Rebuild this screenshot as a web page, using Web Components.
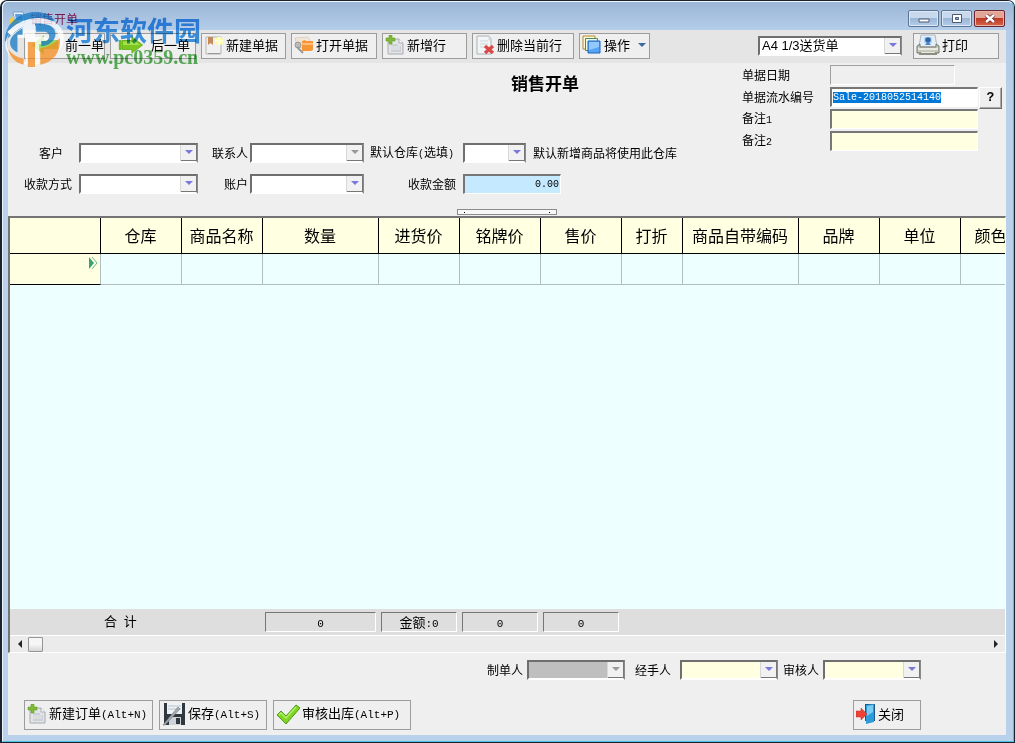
<!DOCTYPE html>
<html lang="zh-CN">
<head>
<meta charset="utf-8">
<meta name="viewport" content="width=device-width, initial-scale=1">
<title>销售开单</title>
<style>
html, body { margin: 0; background: #fff; }
body { font: 12px/20px "Noto Sans CJK SC", "Liberation Sans", sans-serif; color: #000; }
</style>
</head>
<body>
<sales-window></sales-window>

<script>
const ICONS = {
  none: ['0 0 20 20', ''],
  prev: ['0 0 28 22', '<path d="M27 6v9H13v6L1 11 13 1v5z" fill="#7fd02c" opacity=".75"/>'],
  next: ['0 0 28 20', '<path d="M1 5h2v10H1zM4 5h11V1l12 9-12 9v-4H4z" fill="#7cc71f" stroke="#55a313" stroke-width=".8"/><path d="M5 6h11V4l8 6H5z" fill="#a5e04e"/>'],
  bill: ['0 0 20 20', '<path d="M2 2h15v17H2z" fill="#f0f0f0" stroke="#b5b5b5"/><path d="M4 18h12v1H4z" fill="#999"/><path d="M4 2h5v8l-2.5-2L4 10z" fill="#c48a58"/><circle cx="15" cy="6" r="4" fill="#ffff9a"/><path d="M15 2v8M11 6h8" stroke="#fff" stroke-width="1.2"/>'],
  open: ['0 0 20 20', '<path d="M1 3l13-1 3 5-4 6-10-1z" fill="#f1e5da" stroke="#d9c4b4" stroke-width=".7"/><circle cx="4" cy="10" r="3" fill="#bbb" stroke="#999"/><path d="M8 6l3-1 1 1h7v9l-2 1H8z" fill="#f79637"/><path d="M8 8h11v2H8z" fill="#ffbd75"/><path d="M3 12l6 6" stroke="#999" stroke-width="2"/>'],
  add: ['0 0 20 20', '<path d="M3 4h11l4 4v11H3z" fill="#e2e4e7" stroke="#a9abb0"/><path d="M14 4v4h4" fill="#fff" stroke="#a9abb0"/><path d="M6 9h7v2h3v6H6z" fill="#cdd1d6"/><path d="M6 12h9M6 14h9" stroke="#e8eaec"/><path d="M4 0h3v3h3v3H7v3H4V6H1V3h3z" fill="#7fb83a" stroke="#66a024" stroke-width=".6"/>'],
  del: ['0 0 20 20', '<path d="M2 1h12l2 3v15H2z" fill="#f2f5f5" stroke="#aab3b6"/><path d="M14 1v4h3M5 6h8M5 9h8M5 12h5" fill="none" stroke="#cdd5d6"/><path d="M10 11l8 7M18 11l-8 7" stroke="#dc4848" stroke-width="3.4"/>'],
  ops: ['0 0 20 20', '<path d="M1 1h12v13H1z" fill="#fff6d4" stroke="#b08c28"/><path d="M3.500 3.500h12v12h-12z" fill="#eef8ea" stroke="#4a8a6a"/><path d="M6 6h12v12H6z" fill="#57a4f5" stroke="#1f63bd"/><path d="M7 7h10v5L7 15z" fill="#92c8fd"/>'],
  print: ['0 0 24 22', '<path d="M5 1h14l2 12H3z" fill="#e4eef8" stroke="#a9b6c4"/><path d="M8 3h8v6H8z" fill="#b9d8f4"/><circle cx="12" cy="6" r="2.8" fill="#2c64a8"/><path d="M9 11l3-4 3 4z" fill="#4d86c8"/><path d="M1 12l3-2v3h16v-3l3 2v7H1z" fill="#c9cabd" stroke="#77786d"/><path d="M2 15h20" stroke="#f6f6ee" stroke-width="1.4"/><path d="M3 18h18v3H3z" fill="#8d8e83"/><path d="M5 18h14v1H5z" fill="#e5e5dc"/>'],
  save: ['0 0 24 24', '<path d="M2 1h21v22H4l-2-2z" fill="#31383f"/><path d="M5 1h15v11H5z" fill="#eef2f5"/><path d="M6 4h13M6 7h13" stroke="#b9c3ca"/><path d="M7 15h12v8H7z" fill="#cdd3d8"/><path d="M14 16h4v6h-4z" fill="#31383f"/><path d="M1 23L16 5l2 2L3 23z" fill="#a5acb2" stroke="#6f777d" stroke-width=".6"/>'],
  check: ['0 0 24 22', '<path d="M1 12l4-4 5 5L20 2l4 3-14 16z" fill="#7fd424" stroke="#4a9c12"/><path d="M3 12l2-2 5 5L20 4" fill="none" stroke="#b6f06c" stroke-width="1.3"/>'],
  exit: ['0 0 20 22', '<path d="M9 1h10v17H9z" fill="#1d5787"/><path d="M10 2l8-1v18l-8 2z" fill="#2c9bd9"/><path d="M11 3l6-1v7l-6 4z" fill="#79cdf3"/><path d="M0 8h5V5l6 6-6 6v-3H0z" fill="#ee4236" stroke="#c42a22" stroke-width=".5"/>'],
  app: ['0 0 16 16', '<path d="M3 1h10l2 11H5z" fill="#e8f3fc" stroke="#6fa2d2"/><path d="M5 3h7l1 6H6z" fill="#5d9bdc"/><path d="M0 8l4-3v3l5 2-5 5-4-3z" fill="#f2cd48"/>'],
  marker: ['0 0 10 12', '<path d="M1 0v12l5-6z" fill="#3aa374"/><path d="M4 0l5 6-5 6" fill="none" stroke="#6fb594"/>'],
  min: ['0 0 12 9', '<path d="M1 5h10v3H1z" fill="#fff" stroke="#4d5b72"/>'],
  max: ['0 0 12 9', '<path d="M1.500.5h9v8h-9z" fill="#fff" stroke="#4d5b72"/><path d="M4.500 3.500h3v2h-3z" fill="#90a8ca" stroke="#4d5b72"/>'],
  close: ['0 0 12 9', '<path d="M2 1l8 7M10 1L2 8" stroke="#6b2b30" stroke-width="4"/><path d="M2 1l8 7M10 1L2 8" stroke="#fff" stroke-width="2.4"/>'],
  left: ['0 0 5 8', '<path d="M5 0v8L1 4z" fill="#222"/>'],
  right: ['0 0 5 8', '<path d="M0 0v8l4-4z" fill="#222"/>'],
  drop: ['0 0 8 5', '<path d="M0 0h8L4 4z" fill="currentColor"/>'],
};

/* Wraps Latin runs so that they keep the half-width pitch beside Chinese text. */
const mixed = (text) => text.replace(/[\x21-\x7e]+/g, (m) => `<span class="en">${m}</span>`);
const EN = '.en { font-family: "Liberation Mono", monospace; font-size: var(--en, 10px); white-space: pre; }';

function define(name, render, after) {
  customElements.define(name, class extends HTMLElement {
    connectedCallback() {
      if (this.shadowRoot) return;
      const t = document.createElement('template');
      t.innerHTML = render(this);
      this.attachShadow({ mode: 'open' }).append(t.content.cloneNode(true));
      if (after) after(this.shadowRoot, this);
    }
  });
}
const at = (el, n, d = '') => el.getAttribute(n) ?? d;

define('app-icon', (el) => {
  const [box, body] = ICONS[at(el, 'name', 'none')];
  return `<style>
    :host { display: block; flex: none; width: 20px; height: 20px; }
    svg { display: block; width: 100%; height: 100%; }
  </style><svg viewBox="${box}" aria-hidden="true">${body}</svg>`;
});

define('tool-button', (el) => `<style>
    :host { display: block; flex: none; width: var(--w); height: 26px; }
    button { box-sizing: border-box; width: 100%; height: 100%; display: flex; align-items: center; gap: 2px;
      margin: 0; padding: 0 2px 2px; border: 1px solid #9c9c9c; background: #efefef; color: #000;
      font: inherit; font-size: 13px; line-height: 20px; white-space: nowrap; --en: 11px; }
    app-icon { width: var(--icon, 20px); height: var(--icon-h, 20px); }
    .arrow { width: 8px; height: 5px; color: #39699f; margin-left: 6px; }
    ${EN}
  </style>
  <button type="button"><app-icon name="${at(el, 'icon')}"></app-icon><span>${mixed(at(el, 'label'))}</span>${
    el.hasAttribute('menu') ? '<app-icon class="arrow" name="drop"></app-icon>' : ''}</button>`);

define('combo-field', (el) => `<style>
    :host { display: flex; flex: none; align-items: center; height: 20px; }
    label { box-sizing: border-box; width: var(--label, 0px); padding-right: var(--pad, 0px); text-align: right; white-space: nowrap; }
    .box { position: relative; width: var(--control); height: 20px; }
    select { appearance: none; box-sizing: border-box; display: block; width: 100%; height: 100%; margin: 0; padding: 0 20px 0 2px;
      border: 2px solid; border-color: #6f6f6f #8a8a8a #fff #6f6f6f; border-radius: 0; background: var(--fill, #fff);
      color: #000; opacity: 1; font: inherit; font-size: 13px; line-height: 16px;
      font-family: "Liberation Sans", "Noto Sans CJK SC", sans-serif; outline: none; }
    .knob { position: absolute; right: 1px; top: 2px; width: 15px; height: 15px; display: grid; place-items: center; pointer-events: none;
      background: #f1f1f1; border: solid #777; border-width: 0 1px 1px 0; box-shadow: -1px 0 #d8d8d8; }
    .knob app-icon { width: 8px; height: 5px; color: ${el.hasAttribute('disabled') ? '#9a9a9a' : '#7a78dc'}; }
    ${EN}
  </style>
  ${at(el, 'label') ? `<label for="c">${mixed(at(el, 'label'))}</label>` : ''}
  <div class="box"><select id="c" ${at(el, 'label') ? '' : 'aria-label="打印模板"'} ${el.hasAttribute('disabled') ? 'disabled' : ''}><option>${at(el, 'value')}</option></select>
  <span class="knob"><app-icon name="drop"></app-icon></span></div>`);

define('text-field', (el) => `<style>
    :host { display: flex; flex: none; align-items: center; height: 20px; }
    label { box-sizing: border-box; width: var(--label); padding-right: var(--pad, 0px); text-align: var(--align, left); white-space: nowrap; }
    input { box-sizing: border-box; width: var(--control); height: 20px; margin: 0; padding: 0 1px; border-radius: 0; outline: none;
      border: solid; border-width: 2px 1px 1px 2px; border-color: #777 #fff #fff #777; background: var(--fill, #fff); color: #000;
      font: 10px/12px "Liberation Mono", monospace; text-align: var(--text, left); }
    input:disabled { border-width: 1px; border-color: #a0a0a0 #fff #fff #a0a0a0; background: #efefef; }
    input::selection { background: #0078d7; color: #fff; }
    ${EN}
  </style><label for="t">${mixed(at(el, 'label'))}</label><input id="t" type="text" value="${at(el, 'value')}" ${el.hasAttribute('disabled') ? 'disabled' : ''}>`,
  (root, el) => {
    if (!el.hasAttribute('selected')) return;
    const input = root.querySelector('input');
    input.focus();
    input.select();
  });

define('title-bar', () => `<style>
    :host { display: flex; justify-content: space-between; height: 28px; }
    .name { display: flex; align-items: center; gap: 4px; padding-left: 2px; color: #7b1550; height: 34px; }
    .name app-icon { width: 16px; height: 16px; }
    .keys { display: flex; gap: 2px; padding: 8px 1px 0 0; }
    button { box-sizing: border-box; width: 31px; height: 17px; padding: 0; display: grid; place-items: center;
      border: 1px solid #5c7595; border-radius: 2px; background: linear-gradient(#c8d9ee 45%, #9cb6d6 50%, #b5cde9); box-shadow: inset 0 0 0 1px #dce8f5; }
    button.x { border-color: #6c2530; background: linear-gradient(#e3a595 45%, #c03a25 50%, #d2664a); box-shadow: inset 0 0 0 1px #e8b5a8; }
    button app-icon { width: 12px; height: 9px; }
  </style>
  <div class="name"><app-icon name="app"></app-icon><span>销售开单</span></div>
  <div class="keys">
    <button type="button" aria-label="最小化"><app-icon name="min"></app-icon></button>
    <button type="button" aria-label="最大化"><app-icon name="max"></app-icon></button>
    <button type="button" class="x" aria-label="关闭窗口"><app-icon name="close"></app-icon></button>
  </div>`);

define('tool-bar', () => `<style>
    :host { display: flex; align-items: flex-start; gap: 5px; height: 33px; box-sizing: border-box; padding: 3px 7px 0 16px; background: #e5e5e5; }
    .space { flex: 1; }
    combo-field { padding-top: 3px; margin-right: 6px; --control: 144px; }
  </style>
  <tool-button icon="prev" label="前一单" style="--w:81px;--icon:36px;--icon-h:22px"></tool-button>
  <tool-button icon="next" label="后一单" style="--w:86px;--icon:36px;--icon-h:18px"></tool-button>
  <tool-button icon="bill" label="新建单据" style="--w:85px"></tool-button>
  <tool-button icon="open" label="打开单据" style="--w:86px"></tool-button>
  <tool-button icon="add" label="新增行" style="--w:85px"></tool-button>
  <tool-button icon="del" label="删除当前行" style="--w:102px"></tool-button>
  <tool-button icon="ops" label="操作" menu style="--w:71px"></tool-button>
  <span class="space"></span>
  <combo-field value="A4 1/3送货单"></combo-field>
  <tool-button icon="print" label="打印" style="--w:86px;--icon:24px;--icon-h:22px"></tool-button>`);

define('order-head', () => `<style>
    :host { display: grid; grid-template-columns: 1fr 264px; }
    .main { display: flex; flex-direction: column; gap: 11px; padding: 8px 0 0 16px; }
    h1 { margin: 0 0 37px; padding-left: 324px; text-align: center; font-size: 17px; line-height: 24px; }
    .row { display: flex; gap: 0; white-space: nowrap; }
    .one { --label: 55px; --control: 119px; }
    .two { --label: 52px; --control: 114px; }
    .three { --label: 99px; }
    .hint { padding-left: 7px; }
    aside { display: flex; flex-direction: column; gap: 2px; padding-top: 2px; --label: 88px; --control: 148px; }
    .number { display: flex; gap: 1px; }
    .number button { width: 23px; height: 22px; margin: 0 0 -2px; padding: 0; border: 1px solid; border-color: #fff #6f6f6f #6f6f6f #fff;
      box-shadow: inset -1px -1px #a8a8a8; background: #efefef; color: #000; font: bold 13px/18px "Liberation Mono", monospace; }
  </style>
  <div class="main">
    <h1>销售开单</h1>
    <div class="row">
      <combo-field class="one" label="客户" style="--pad:16px"></combo-field>
      <combo-field class="two" label="联系人" disabled style="--pad:2px"></combo-field>
      <combo-field class="three" label="默认仓库(选填)" style="--pad:9px;--control:63px"></combo-field>
      <span class="hint">默认新增商品将使用此仓库</span>
    </div>
    <div class="row">
      <combo-field class="one" label="收款方式" style="--pad:7px"></combo-field>
      <combo-field class="two" label="账户" style="--pad:2px"></combo-field>
      <text-field class="three" label="收款金额" value="0.00" style="--pad:7px;--align:right;--control:98px;--fill:#c5eaff;--text:right"></text-field>
    </div>
  </div>
  <aside>
    <text-field label="单据日期" disabled style="--control:125px"></text-field>
    <div class="number"><text-field label="单据流水编号" value="Sale-2018052514140" selected></text-field><button type="button">?</button></div>
    <text-field label="备注1" style="--fill:#ffffe1"></text-field>
    <text-field label="备注2" style="--fill:#ffffe1"></text-field>
  </aside>`);

define('split-handle', () => `<style>
    :host { display: flex; justify-content: center; height: 6px; margin: 15px 0 1px; }
    div { box-sizing: border-box; width: 100px; display: flex; justify-content: space-between; align-items: center; padding: 0 6px; border: 1px solid #8c8c8c; background: #f8f8f8; }
    i { width: 1px; height: 1px; background: #000; }
  </style><div role="separator"><i></i><i></i></div>`);

const COLS = [['', 91], ['仓库', 81], ['商品名称', 81], ['数量', 116], ['进货价', 81], ['铭牌价', 81], ['售价', 81],
  ['打折', 61], ['商品自带编码', 116], ['品牌', 81], ['单位', 81], ['颜色', 61]];

define('data-grid', () => `<style>
    :host { display: flex; flex-direction: column; box-sizing: border-box; border: solid; border-width: 2px 1px 1px 2px; border-color: #747474 #fff #fff #747474; }
    .view { flex: 1; overflow: hidden; background: #edffff; }
    table { table-layout: fixed; width: ${COLS.reduce((s, c) => s + c[1], 0)}px; border-collapse: separate; border-spacing: 0; }
    th, td { box-sizing: border-box; padding: 0; white-space: nowrap; }
    thead th { height: 36px; padding: 0 1px 2px 0; background: #ffffe1; border: solid #000; border-width: 0 1px 1px 0; font-size: 16px; font-weight: 400; line-height: 24px; }
    td, tbody th { height: 31px; border: solid #b2bfbf; border-width: 0 1px 1px 0; }
    tbody th { background: #ffffe1; border-bottom-color: #000; vertical-align: top; }
    tbody app-icon { width: 10px; height: 12px; margin: 3px 2px 0 auto; }
    .sum { display: flex; align-items: flex-start; gap: 5px; height: 26px; box-sizing: border-box; padding-top: 3px; background: #dedede; font-size: 13px; line-height: 18px; --en: 11px; text-align: center; }
    .sum .t { width: 156px; padding-left: 94px; text-align: left; }
    output { box-sizing: border-box; width: 76px; height: 20px; border: 1px solid; border-color: #767676 #fff #fff #767676; }
    output.wide { width: 111px; }
    .bar { display: flex; align-items: center; height: 16px; border-top: 1px solid #fff; background: #ebebeb; }
    .bar button { width: 18px; height: 16px; padding: 0; border: 0; background: none; display: grid; place-items: center; }
    .bar button app-icon { width: 5px; height: 8px; }
    .thumb { box-sizing: border-box; width: 15px; height: 15px; border: 1px solid #959595; border-radius: 1px; background: linear-gradient(#f6f6f6 50%, #d6d6d6); }
    .track { flex: 1; }
    ${EN}
  </style>
  <div class="view"><table>
    <colgroup>${COLS.map((c) => `<col style="width:${c[1]}px">`).join('')}</colgroup>
    <thead><tr>${COLS.map((c) => `<th scope="col">${c[0]}</th>`).join('')}</tr></thead>
    <tbody><tr><th scope="row"><app-icon name="marker"></app-icon></th>${'<td></td>'.repeat(COLS.length - 1)}</tr></tbody>
  </table></div>
  <div class="sum"><span class="t">合<span class="en"> </span>计</span><output class="wide">${mixed('0')}</output><output>${mixed('金额:0')}</output><output>${mixed('0')}</output><output>${mixed('0')}</output></div>
  <div class="bar"><button type="button" aria-label="向左滚动"><app-icon name="left"></app-icon></button><span class="thumb"></span><span class="track"></span><button type="button" aria-label="向右滚动"><app-icon name="right"></app-icon></button></div>`);

define('order-foot', () => `<style>
    :host { display: flex; flex-direction: column; gap: 20px; padding: 7px 85px 5px 16px; }
    .people { display: flex; justify-content: flex-end; --control: 98px; }
    .acts { display: flex; gap: 6px; }
    .acts tool-button { height: 30px; }
    .space { flex: 1; }
  </style>
  <div class="people">
    <combo-field label="制单人" disabled style="--label:40px;--pad:4px;--fill:#bfbfbf"></combo-field>
    <combo-field label="经手人" style="--label:55px;--pad:9px;--fill:#ffffe1"></combo-field>
    <combo-field label="审核人" style="--label:45px;--pad:4px;--fill:#ffffe1"></combo-field>
  </div>
  <div class="acts">
    <tool-button icon="add" label="新建订单(Alt+N)" style="--w:129px"></tool-button>
    <tool-button icon="save" label="保存(Alt+S)" style="--w:108px;--icon:24px;--icon-h:24px"></tool-button>
    <tool-button icon="check" label="审核出库(Alt+P)" style="--w:138px;--icon:24px;--icon-h:22px"></tool-button>
    <span class="space"></span>
    <tool-button icon="exit" label="关闭" style="--w:68px;--icon-h:22px"></tool-button>
  </div>`);

define('site-mark', () => `<style>
    :host { display: flex; gap: 2px; align-items: flex-start; pointer-events: none; }
    svg { width: 60px; height: 60px; opacity: .75; }
    b { display: block; font: bold 27px/32px "Noto Sans CJK SC", sans-serif; color: #3f9aea; }
    i { display: block; font: bold 20px/22px "Liberation Serif", serif; color: #5cb45a; }
    div { padding-top: 4px; white-space: nowrap; mix-blend-mode: multiply; }
  </style>
  <svg viewBox="0 0 58 58" aria-hidden="true">
    <path d="M1 31C0 15 13 3 29 2c9-1 17 3 20 8L36 15C22 14 9 19 1 31z" fill="#1379c4"/>
    <path d="M5 23C16 11 34 7 46 13c12 6 12 19 3 27-6 6-14 9-21 8" fill="none" stroke="#fff" stroke-width="5"/>
    <path d="M5 23C-1 36 7 49 21 50V27h-8v-6l9-8h8v13h10c4 0 4 7 0 7h-6v19c-9 3-19 0-25-5C-1 40 0 30 5 23z" fill="#fff"/>
    <path d="M7 27c4-5 7-7 11-9v6h-5v17c-6-3-9-8-6-14z" fill="#1379c4"/>
    <path d="M31 14h10c9 2 12 11 5 17-3 3-7 4-10 4v-5h4c5-1 5-8 0-9h-9z" fill="#1379c4"/>
    <path d="M23 31h7v24h-7zM35 37c7-1 13-4 19-10 1 14-6 23-19 26zM4 38c4 5 9 8 15 9v6C11 51 6 46 4 38z" fill="#f58b1c"/>
  </svg>
  <div><b>河东软件园</b><i>www.pc0359.cn</i></div>`);

define('sales-window', () => `<style>
    :host { display: flex; flex-direction: column; position: relative; box-sizing: border-box; min-height: 100vh;
      border: solid; border-width: 1px 1px 1px 2px; border-color: #1b2330; border-radius: 7px 7px 0 0; background: #b9d1ea; }
    .frame { flex: 1; display: flex; flex-direction: column; padding: 0 7px 6px 5px; border: 1px solid; border-color: #f2f8ff #47c4e4 #47c4e4 #eaf3fc; border-radius: 6px 6px 0 0;
      background: linear-gradient(#9bb6d6, #b4cde9 28px, #b9d1ea 120px); }
    title-bar { margin-right: -7px; padding-right: 7px; }
    main { flex: 1; display: flex; flex-direction: column; background: #efefef; }
    data-grid { flex: 1; }
    site-mark { position: absolute; left: 2px; top: 9px; }
  </style>
  <div class="frame">
    <title-bar></title-bar>
    <main>
      <tool-bar></tool-bar>
      <order-head></order-head>
      <split-handle></split-handle>
      <data-grid></data-grid>
      <order-foot></order-foot>
    </main>
  </div>
  <site-mark></site-mark>`);
</script>
</body>
</html>
